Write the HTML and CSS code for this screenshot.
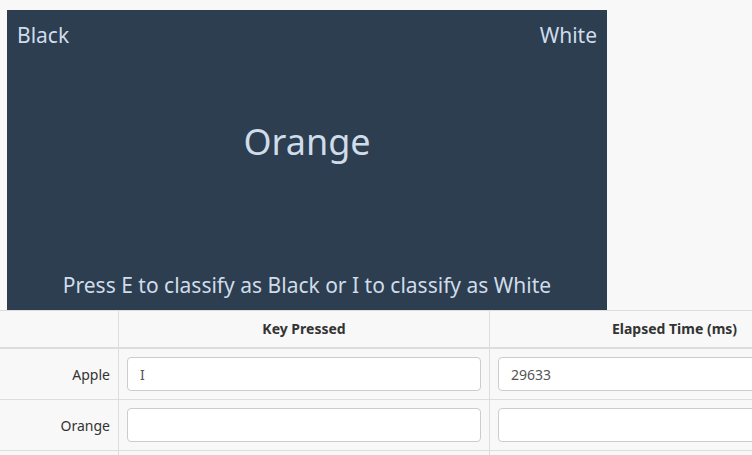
FILE: index.html
```html
<!DOCTYPE html>
<html>
<head>
<meta charset="utf-8">
<link rel="stylesheet" href="styles.css">
</head>
<body>
<div class="panel">
  <div class="labels">
    <span>Black</span>
    <span>White</span>
  </div>
  <div class="stimulus">Orange</div>
  <div class="instructions">Press E to classify as Black or I to classify as White</div>
</div>
<table class="results">
  <colgroup>
    <col class="c1">
    <col class="c2">
    <col class="c3">
  </colgroup>
  <thead>
    <tr>
      <th></th>
      <th>Key Pressed</th>
      <th>Elapsed Time (ms)</th>
    </tr>
  </thead>
  <tbody>
    <tr>
      <td class="word">Apple</td>
      <td><input class="field" type="text" value="I"></td>
      <td><input class="field" type="text" value="29633"></td>
    </tr>
    <tr>
      <td class="word">Orange</td>
      <td><input class="field" type="text" value=""></td>
      <td><input class="field" type="text" value=""></td>
    </tr>
    <tr>
      <td class="word">&nbsp;</td>
      <td></td>
      <td></td>
    </tr>
  </tbody>
</table>
</body>
</html>
```

FILE: styles.css
```css
html, body {
  margin: 0;
  padding: 0;
  background: #f8f8f8;
  font-family: "Noto Sans", sans-serif;
  overflow: hidden;
}

.panel {
  box-sizing: border-box;
  width: 600px;
  height: 300px;
  margin: 10px 0 0 7px;
  padding: 10px 10px 10px 10px;
  background: #2c3e50;
  color: #d0dcea;
  display: flex;
  flex-direction: column;
}

.labels {
  display: flex;
  justify-content: space-between;
  font-size: 21px;
  line-height: 30px;
}

.stimulus {
  text-align: center;
  font-size: 36px;
  line-height: 48px;
  margin-top: 68px;
}

.instructions {
  margin-top: auto;
  text-align: center;
  font-size: 21px;
  line-height: 30px;
}

.results {
  border-collapse: collapse;
  table-layout: fixed;
  width: 860px;
  font-size: 14px;
  line-height: 20px;
  color: #333;
  margin-left: -1px;
}

.c1 { width: 119px; }
.c2 { width: 371px; }
.c3 { width: 370px; }

.results th,
.results td {
  border: 1px solid #ddd;
  padding: 8px;
  vertical-align: middle;
}

.results thead th {
  border-bottom: 2px solid #ddd;
  font-weight: bold;
  text-align: center;
}

.results td.word {
  text-align: right;
  padding-top: 9px;
  padding-bottom: 7px;
}

.field {
  display: block;
  box-sizing: border-box;
  width: 100%;
  height: 34px;
  margin: 0;
  padding: 6px 12px;
  border: 1px solid #ccc;
  border-radius: 4px;
  background: #fff;
  font-family: "Noto Sans", sans-serif;
  font-size: 14px;
  line-height: 20px;
  color: #555;
}
```
